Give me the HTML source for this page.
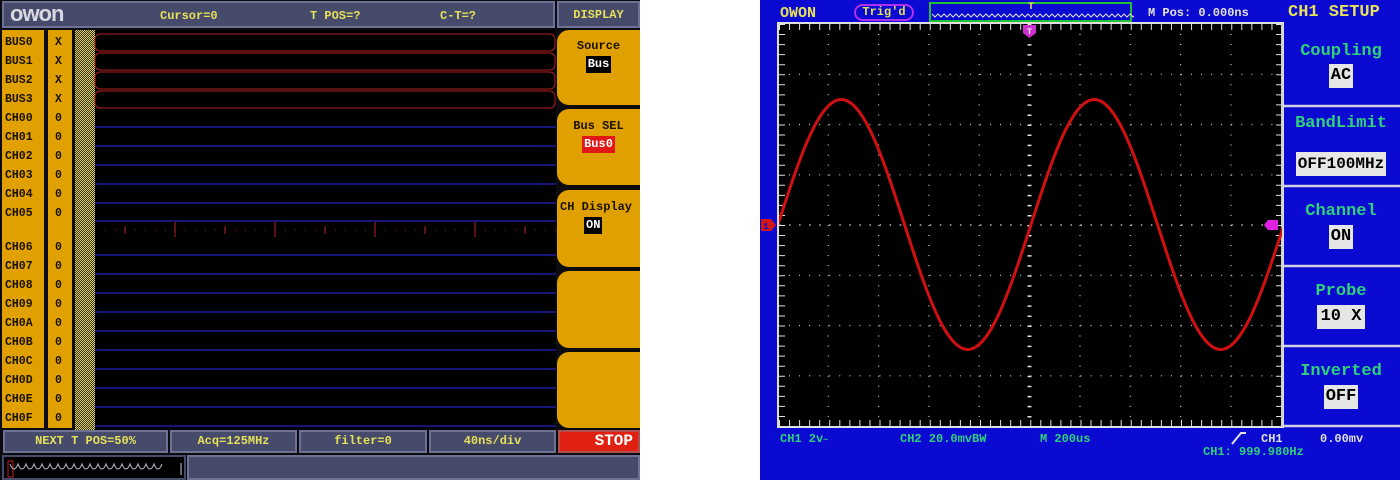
<!DOCTYPE html>
<html><head><meta charset="utf-8"><style>
*{margin:0;padding:0;box-sizing:border-box}
body{width:1400px;height:480px;background:#fff;position:relative;overflow:hidden;font-family:"Liberation Mono",monospace;font-weight:bold}
.a{position:absolute}
.lab{position:absolute;font-size:11.5px;color:#1a1200;line-height:12px}
.bar{position:absolute;background:#474b6b;border:2px solid #6e7294;color:#e6e05a;font-size:12px;text-align:center;line-height:18px}
.btn{position:absolute;left:557px;width:83px;background:#e0a000;border-radius:12px 0 0 12px;text-align:center;font-size:12px;color:#1a1200}
.g{color:#2fd27a;font-size:17px;text-align:center;position:absolute;left:1282px;width:118px}
.box{display:inline-block;background:#e6e6e6;color:#000;padding:0 2px;font-size:17px;line-height:24px}
.gt{position:absolute;color:#2fd27a;font-size:12px}
</style></head><body>
<!-- LEFT SCREEN -->
<div class="a" style="left:0;top:0;width:640px;height:480px;background:#0c0c10"></div>
<div class="a" style="left:2px;top:1px;width:553px;height:27px;background:#474b6b;border:2px solid #6e7294"></div>
<div class="a" style="left:10px;top:1px;font-family:'Liberation Sans',sans-serif;font-size:22px;color:#d8d8e0;font-weight:bold;letter-spacing:-1px">owon</div>
<div class="a" style="left:160px;top:9px;color:#e6e05a;font-size:12px">Cursor=0</div>
<div class="a" style="left:310px;top:9px;color:#e6e05a;font-size:12px">T POS=?</div>
<div class="a" style="left:440px;top:9px;color:#e6e05a;font-size:12px">C-T=?</div>
<div class="a" style="left:557px;top:1px;width:83px;height:27px;background:#474b6b;border:2px solid #6e7294;color:#e6e05a;font-size:12px;text-align:center;line-height:24px">DISPLAY</div>
<div class="a" style="left:2px;top:30px;width:42px;height:398px;background:#e0a000"></div>
<div class="a" style="left:48px;top:30px;width:24px;height:398px;background:#e0a000"></div>
<div class="a" style="left:75px;top:30px;width:20px;height:400px;background:repeating-conic-gradient(#d8cc60 0 25%,#3a3620 0 50%) 0 0/2px 2px"></div>
<div class="a" style="left:95px;top:30px;width:461px;height:400px;background:#000"></div>
<svg class="a" style="left:0;top:0" width="640" height="480">
<g fill="none" stroke="#b02020" stroke-width="1">
<rect x="95" y="34" width="460" height="17" rx="5"/><rect x="95" y="53" width="460" height="17" rx="5"/><rect x="95" y="72" width="460" height="17" rx="5"/><rect x="95" y="91" width="460" height="17" rx="5"/>
</g>
<g stroke="#1c1ca0" stroke-width="1.5">
<line x1="95" x2="556" y1="127" y2="127"/><line x1="95" x2="556" y1="146" y2="146"/><line x1="95" x2="556" y1="165" y2="165"/><line x1="95" x2="556" y1="184" y2="184"/><line x1="95" x2="556" y1="203" y2="203"/><line x1="95" x2="556" y1="221" y2="221"/>
<line x1="95" x2="556" y1="255" y2="255"/><line x1="95" x2="556" y1="274" y2="274"/><line x1="95" x2="556" y1="293" y2="293"/><line x1="95" x2="556" y1="312" y2="312"/><line x1="95" x2="556" y1="331" y2="331"/><line x1="95" x2="556" y1="350" y2="350"/><line x1="95" x2="556" y1="369" y2="369"/><line x1="95" x2="556" y1="388" y2="388"/><line x1="95" x2="556" y1="407" y2="407"/><line x1="95" x2="556" y1="426" y2="426"/>
</g>
<line x1="105" x2="556" y1="230" y2="230" stroke="#a02020" stroke-width="1" stroke-dasharray="1 9"/>
<g stroke="#b02020"><line x1="175" x2="175" y1="222" y2="237"/><line x1="275" x2="275" y1="222" y2="237"/><line x1="375" x2="375" y1="222" y2="237"/><line x1="475" x2="475" y1="222" y2="237"/><line x1="225" x2="225" y1="226" y2="234"/><line x1="325" x2="325" y1="226" y2="234"/><line x1="425" x2="425" y1="226" y2="234"/><line x1="525" x2="525" y1="226" y2="234"/><line x1="125" x2="125" y1="226" y2="234"/></g>
</svg>
<div class="lab" style="left:5px;top:37px">BUS0</div><div class="lab" style="left:55px;top:37px">X</div>
<div class="lab" style="left:5px;top:56px">BUS1</div><div class="lab" style="left:55px;top:56px">X</div>
<div class="lab" style="left:5px;top:75px">BUS2</div><div class="lab" style="left:55px;top:75px">X</div>
<div class="lab" style="left:5px;top:94px">BUS3</div><div class="lab" style="left:55px;top:94px">X</div>
<div class="lab" style="left:5px;top:113px">CH00</div><div class="lab" style="left:55px;top:113px">0</div>
<div class="lab" style="left:5px;top:132px">CH01</div><div class="lab" style="left:55px;top:132px">0</div>
<div class="lab" style="left:5px;top:151px">CH02</div><div class="lab" style="left:55px;top:151px">0</div>
<div class="lab" style="left:5px;top:170px">CH03</div><div class="lab" style="left:55px;top:170px">0</div>
<div class="lab" style="left:5px;top:189px">CH04</div><div class="lab" style="left:55px;top:189px">0</div>
<div class="lab" style="left:5px;top:208px">CH05</div><div class="lab" style="left:55px;top:208px">0</div>
<div class="lab" style="left:5px;top:242px">CH06</div><div class="lab" style="left:55px;top:242px">0</div>
<div class="lab" style="left:5px;top:261px">CH07</div><div class="lab" style="left:55px;top:261px">0</div>
<div class="lab" style="left:5px;top:280px">CH08</div><div class="lab" style="left:55px;top:280px">0</div>
<div class="lab" style="left:5px;top:299px">CH09</div><div class="lab" style="left:55px;top:299px">0</div>
<div class="lab" style="left:5px;top:318px">CH0A</div><div class="lab" style="left:55px;top:318px">0</div>
<div class="lab" style="left:5px;top:337px">CH0B</div><div class="lab" style="left:55px;top:337px">0</div>
<div class="lab" style="left:5px;top:356px">CH0C</div><div class="lab" style="left:55px;top:356px">0</div>
<div class="lab" style="left:5px;top:375px">CH0D</div><div class="lab" style="left:55px;top:375px">0</div>
<div class="lab" style="left:5px;top:394px">CH0E</div><div class="lab" style="left:55px;top:394px">0</div>
<div class="lab" style="left:5px;top:413px">CH0F</div><div class="lab" style="left:55px;top:413px">0</div>
<div class="btn" style="top:30px;height:75px;padding-top:9px">Source<br><span style="background:#000;color:#fff;padding:0 2px;line-height:17px;display:inline-block;margin-top:3px">Bus</span></div>
<div class="btn" style="top:109px;height:76px;padding-top:10px">Bus SEL<br><span style="background:#e01818;color:#fff;padding:0 2px;line-height:17px;display:inline-block;margin-top:3px">Bus0</span></div>
<div class="btn" style="top:190px;height:77px;padding-top:10px;text-align:left;padding-left:3px;white-space:nowrap">CH Display<br><span style="background:#000;color:#fff;padding:0 2px;line-height:17px;display:inline-block;margin:3px 0 0 24px">ON</span></div>
<div class="btn" style="top:271px;height:77px"></div>
<div class="btn" style="top:352px;height:76px"></div>
<div class="bar" style="left:3px;top:430px;width:165px;height:23px">NEXT T POS=50%</div>
<div class="bar" style="left:170px;top:430px;width:127px;height:23px">Acq=125MHz</div>
<div class="bar" style="left:299px;top:430px;width:128px;height:23px">filter=0</div>
<div class="bar" style="left:429px;top:430px;width:127px;height:23px">40ns/div</div>
<div class="a" style="left:558px;top:430px;width:82px;height:23px;background:#e02010;border:2px solid #b05050;color:#fff;font-size:16px;text-align:right;padding-right:5px;line-height:19px">STOP</div>
<div class="a" style="left:2px;top:455px;width:184px;height:25px;background:#000;border:2px solid #474b6b"></div>
<svg class="a" style="left:0;top:455px" width="190" height="25">
<rect x="8" y="6" width="5" height="16" fill="none" stroke="#c02020"/>
<path d="M10 9 q4 10 8 0 q4 10 8 0 q4 10 8 0 q4 10 8 0 q4 10 8 0 q4 10 8 0 q4 10 8 0 q4 10 8 0 q4 10 8 0 q4 10 8 0 q4 10 8 0 q4 10 8 0 q4 10 8 0 q4 10 8 0 q4 10 8 0 q4 10 8 0 q4 10 8 0 q4 10 8 0 q4 10 8 0" fill="none" stroke="#c8c8d8" stroke-width="1"/>
<line x1="181" x2="181" y1="8" y2="20" stroke="#c8c8d8"/>
</svg>
<div class="a" style="left:187px;top:455px;width:453px;height:25px;background:#474b6b;border:2px solid #6e7294"></div>

<!-- RIGHT SCREEN -->
<div class="a" style="left:760px;top:0;width:640px;height:480px;background:#0a0ad2"></div>
<div class="a" style="left:780px;top:5px;color:#e6e05a;font-size:15px">OWON</div>
<div class="a" style="left:854px;top:4px;width:60px;height:17px;border:2px solid #b030f0;border-radius:9px;color:#e6e05a;font-size:12px;text-align:center;line-height:13px">Trig'd</div>
<div class="a" style="left:929px;top:2px;width:203px;height:20px;border:2px solid #20c030"></div>
<svg class="a" style="left:929px;top:0" width="205" height="24">
<path d="M3 14 l3 3 l3 -3 l3 3 l3 -3 l3 3 l3 -3 l3 3 l3 -3 l3 3 l3 -3 l3 3 l3 -3 l3 3 l3 -3 l3 3 l3 -3 l3 3 l3 -3 l3 3 l3 -3 l3 3 l3 -3 l3 3 l3 -3 l3 3 l3 -3 l3 3 l3 -3 l3 3 l3 -3 l3 3 l3 -3 l3 3 l3 -3 l3 3 l3 -3 l3 3 l3 -3 l3 3 l3 -3 l3 3 l3 -3 l3 3 l3 -3 l3 3 l3 -3 l3 3 l3 -3 l3 3 l3 -3 l3 3 l3 -3 l3 3 l3 -3 l3 3 l3 -3 l3 3 l3 -3 l3 3 l3 -3 l3 3 l3 -3 l3 3 l3 -3 l3 3 l3 -3 l3 3 l3 -3 l3 3 l3 -3 l3 3 l3 -3 l3 3 l3 -3 l3 3" fill="none" stroke="#e0e0e0" stroke-width="1"/>
<text x="102" y="9" fill="#e6e05a" font-size="10" font-family="Liberation Mono" font-weight="bold" text-anchor="middle">T</text>
</svg>
<div class="a" style="left:1148px;top:6px;color:#e0e0e0;font-size:12px">M Pos: 0.000ns</div>
<div class="a" style="left:1288px;top:3px;color:#e6e05a;font-size:17px">CH1 SETUP</div>
<svg class="a" style="left:760px;top:0" width="640" height="480">
<rect x="18" y="23" width="505" height="404" fill="#000" stroke="#e0e0e0" stroke-width="2"/>
<g stroke="#d0d0d0" stroke-width="1.2" stroke-dasharray="1 9.05">
<line x1="68.3" x2="68.3" y1="34" y2="426"/><line x1="118.6" x2="118.6" y1="34" y2="426"/><line x1="168.9" x2="168.9" y1="34" y2="426"/><line x1="219.2" x2="219.2" y1="34" y2="426"/><line x1="320" x2="320" y1="34" y2="426"/><line x1="370.3" x2="370.3" y1="34" y2="426"/><line x1="420.6" x2="420.6" y1="34" y2="426"/><line x1="470.9" x2="470.9" y1="34" y2="426"/>
<line x1="29" x2="522" y1="74.3" y2="74.3"/><line x1="29" x2="522" y1="124.5" y2="124.5"/><line x1="29" x2="522" y1="174.8" y2="174.8"/><line x1="29" x2="522" y1="275.3" y2="275.3"/><line x1="29" x2="522" y1="325.5" y2="325.5"/><line x1="29" x2="522" y1="375.8" y2="375.8"/>
</g>
<g stroke="#e0e0e0" stroke-width="1.2">
<line x1="19" x2="522" y1="27" y2="27" stroke-dasharray="1 9.05" stroke-width="6"/>
<line x1="19" x2="522" y1="423" y2="423" stroke-dasharray="1 9.05" stroke-width="6"/>
<line x1="22" x2="22" y1="24" y2="426" stroke-dasharray="1 9.05" stroke-width="6"/>
<line x1="519" x2="519" y1="24" y2="426" stroke-dasharray="1 9.05" stroke-width="6"/>
<line x1="269.5" x2="269.5" y1="24" y2="426" stroke-dasharray="1.5 8.55" stroke-width="4"/>
<line x1="19" x2="522" y1="225" y2="225" stroke-dasharray="1.5 8.55"/>
</g>
<rect x="524" y="24" width="116" height="403" fill="#0a0ad2"/>
<g stroke="#d0d0e0" stroke-width="2.5"><line x1="524" x2="640" y1="106" y2="106"/><line x1="524" x2="640" y1="186" y2="186"/><line x1="524" x2="640" y1="266" y2="266"/><line x1="524" x2="640" y1="346" y2="346"/><line x1="524" x2="640" y1="426" y2="426"/></g>
<line x1="522" x2="522" y1="24" y2="427" stroke="#d0d0e0" stroke-width="2"/>
<clipPath id="c"><rect x="19" y="24" width="503" height="402"/></clipPath>
<g clip-path="url(#c)">
<path transform="translate(-760,0)" d="M778,224.5 C798.63,160.46 818.36,99.5 841.25,99.5 C864.14,99.5 883.87,160.46 904.5,224.5 C925.13,288.54 944.86,349.5 967.75,349.5 C990.64,349.5 1010.37,288.54 1031,224.5 C1051.63,160.46 1071.36,99.5 1094.25,99.5 C1117.14,99.5 1136.87,160.46 1157.5,224.5 C1178.13,288.54 1197.86,349.5 1220.75,349.5 C1243.64,349.5 1263.37,288.54 1284,224.5" fill="none" stroke="#d01010" stroke-width="3"/>
</g>
<path d="M263 25 h13 v8 l-6.5 5 l-6.5 -5z" fill="#d030d0"/>
<text x="269.5" y="34" fill="#fff" font-size="8" text-anchor="middle" font-family="Liberation Mono" font-weight="bold">T</text>
<path d="M1 219 h10 l5 6 l-5 6 h-10z" fill="#d01818"/>
<text x="6" y="229" fill="#0a0ad2" font-size="9" text-anchor="middle" font-family="Liberation Mono" font-weight="bold">1</text>
<path d="M508 220 h10 v10 h-10 l-4 -5z" fill="#e020e0"/>
<path d="M472 444 l9 -11 h5" fill="none" stroke="#e0e0e0" stroke-width="2"/>
</svg>
<div class="g" style="top:42px">Coupling</div>
<div class="g" style="top:64px"><span class="box">AC</span></div>
<div class="g" style="top:114px">BandLimit</div>
<div class="g" style="top:152px"><span class="box" style="font-size:16px">OFF100MHz</span></div>
<div class="g" style="top:202px">Channel</div>
<div class="g" style="top:225px"><span class="box">ON</span></div>
<div class="g" style="top:282px">Probe</div>
<div class="g" style="top:305px"><span class="box" style="padding:0 4px">10 X</span></div>
<div class="g" style="top:362px">Inverted</div>
<div class="g" style="top:385px"><span class="box">OFF</span></div>
<div class="gt" style="left:780px;top:432px">CH1 2v<span style="font-size:8px">~</span></div>
<div class="gt" style="left:900px;top:432px">CH2 20.0mvBW</div>
<div class="gt" style="left:1040px;top:432px">M  200us</div>
<div class="gt" style="left:1261px;top:432px;color:#e0e0e0">CH1</div>
<div class="gt" style="left:1320px;top:432px;color:#e0e0e0">0.00mv</div>
<div class="gt" style="left:1203px;top:445px">CH1: 999.980Hz</div>
</body></html>
